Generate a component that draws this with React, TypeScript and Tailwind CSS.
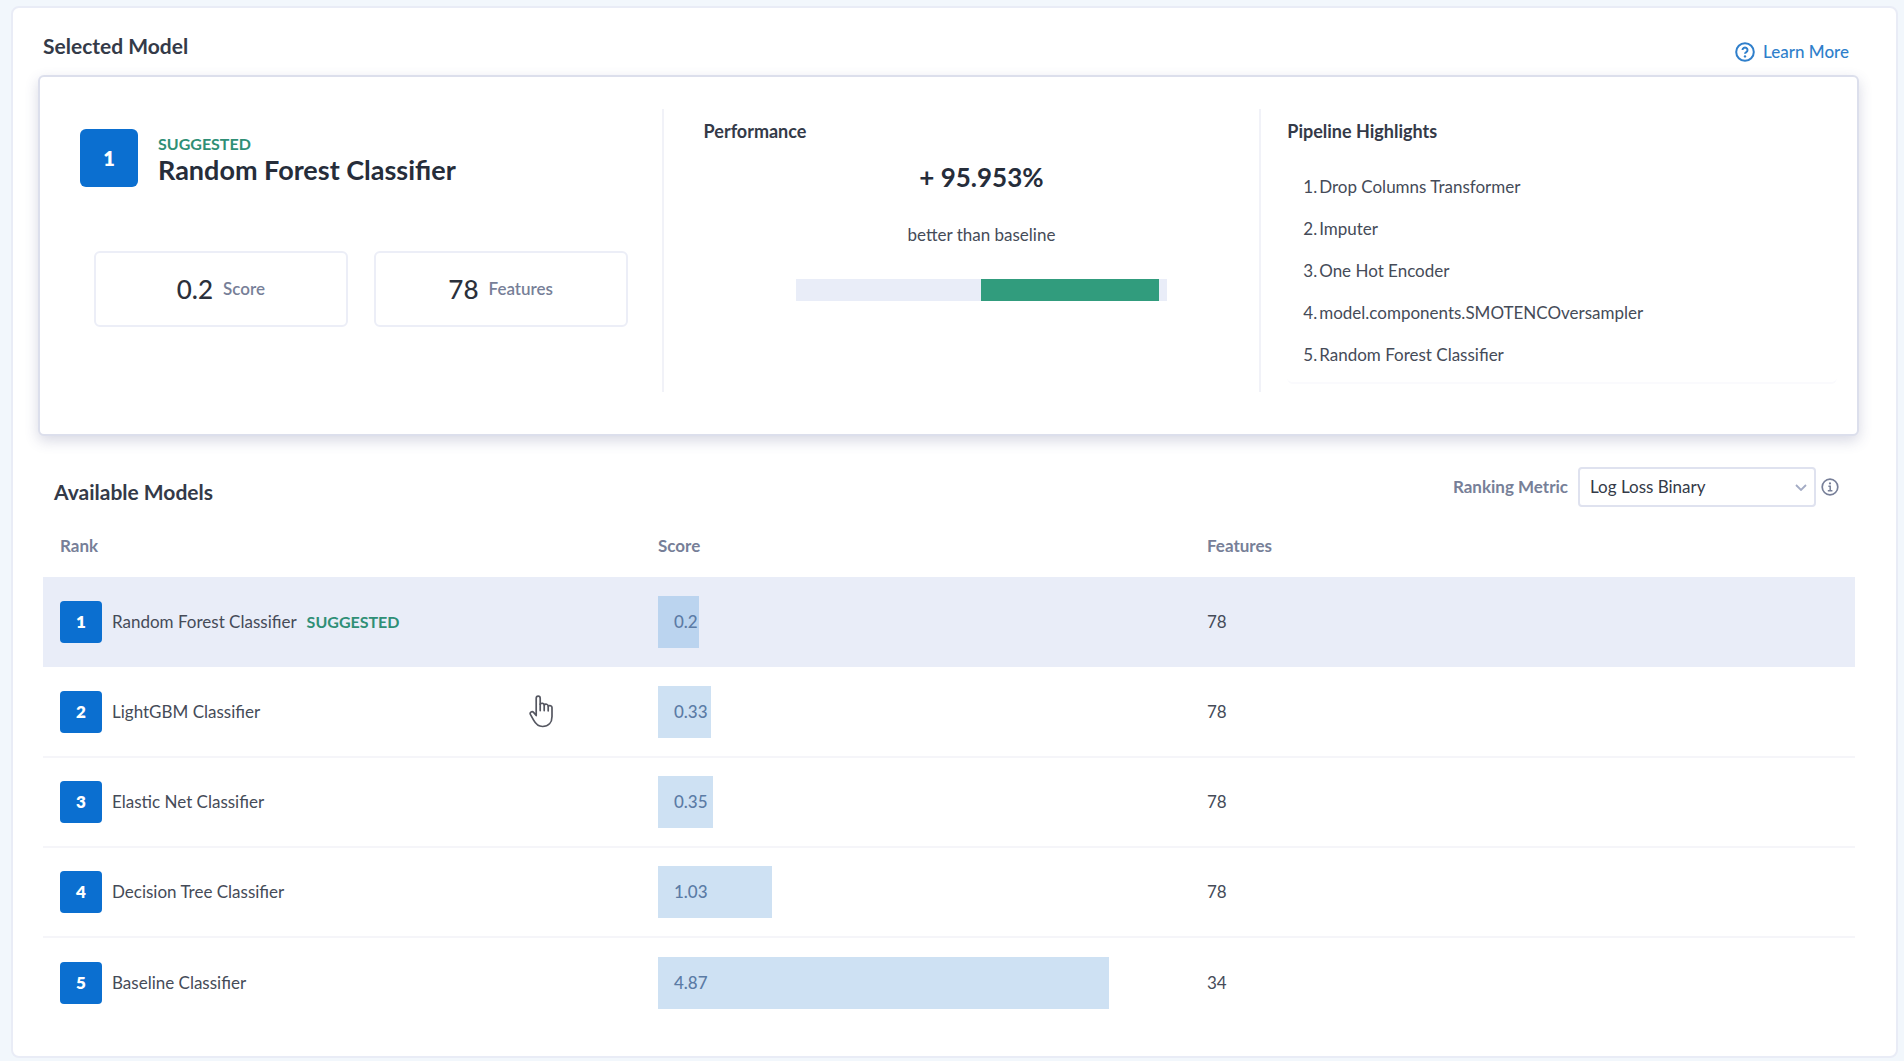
import React, { useState } from "react";

interface Model {
  rank: number;
  name: string;
  score: number;
  features: number;
}

const MODELS: Model[] = [
  { rank: 1, name: "Random Forest Classifier", score: 0.2, features: 78 },
  { rank: 2, name: "LightGBM Classifier", score: 0.33, features: 78 },
  { rank: 3, name: "Elastic Net Classifier", score: 0.35, features: 78 },
  { rank: 4, name: "Decision Tree Classifier", score: 1.03, features: 78 },
  { rank: 5, name: "Baseline Classifier", score: 4.87, features: 34 },
];

const PIPELINE = [
  "Drop Columns Transformer",
  "Imputer",
  "One Hot Encoder",
  "model.components.SMOTENCOversampler",
  "Random Forest Classifier",
];

const METRICS = ["Log Loss Binary", "AUC", "F1", "Precision"];

const IMPROVEMENT = 95.953;

// a small base width keeps the label inside the shortest bars
const barWidth = (score: number) => `${(4.5 + score * 16.5).toFixed(2)}%`;

const HelpIcon = () => (
  <svg className="size-5" viewBox="0 0 20 20" fill="none" stroke="currentColor" strokeWidth="2" aria-hidden="true">
    <circle cx="10" cy="10" r="8.8" />
    <path d="M7.5 8a2.5 2.4 0 1 1 3.8 2.1c-.9.5-1.3.9-1.3 1.7" />
    <circle cx="10" cy="14.4" r="1.2" fill="currentColor" stroke="none" />
  </svg>
);

const InfoIcon = () => (
  <svg className="size-[18px]" viewBox="0 0 18 18" fill="none" stroke="currentColor" strokeWidth="1.7" aria-hidden="true">
    <circle cx="9" cy="9" r="7.8" />
    <path d="M7.4 8.2h1.8v4.2M6.8 12.8h4.6" strokeWidth="1.5" />
    <circle cx="9" cy="5.4" r="1.1" fill="currentColor" stroke="none" />
  </svg>
);

const ChevronIcon = () => (
  <svg className="h-[7px] w-3" viewBox="0 0 12 7" fill="none" stroke="currentColor" strokeWidth="1.8" aria-hidden="true">
    <path d="M1 1l5 5 5-5" />
  </svg>
);

const HandPointer = () => (
  <svg className="h-[33px] w-6" viewBox="0 0 24 33" fill="#fff" stroke="#555761" strokeWidth="1.7" strokeLinejoin="round" strokeLinecap="round" aria-hidden="true">
    <path d="M7.2 20.5V3.4C7.2 .4 11.2 .4 11.2 3.4V9.2C12.6 7.6 15 8.2 15.2 9.8C16.6 8.6 19 9.2 19.2 11C20.8 10 23 10.8 23 12.6V21.5C23 27.5 19.5 31.5 13.6 31.5C8.6 31.5 6.4 28.5 4.6 25.2L1.4 19.4C.4 17 3.2 15.8 4.8 17.6Z" />
    <path d="M11.2 9.2V15.6M15.2 9.8V15.6M19.2 11V15.8" fill="none" />
  </svg>
);

const Stat = ({ value, label }: { value: number; label: string }) => (
  <div className="flex h-[76px] flex-1 items-center justify-center gap-[10px] rounded-md border-2 border-[#eceef7]">
    <span className="text-[26px] font-medium text-[#2b303b]">{value}</span>
    <span className="text-[17px] font-semibold text-[#777f98]">{label}</span>
  </div>
);

const SelectedModel = ({ model }: { model: Model }) => (
  <section className="grid min-h-[361px] grid-cols-[26fr_25fr_25fr] rounded-md border-2 border-[#dcdfec] bg-white pt-8 pb-[42px] shadow-[0_5px_14px_rgba(60,65,120,0.2)]">
    <div className="pt-5 pr-[34px] pl-10">
      <div className="flex items-center gap-5">
        <span className="flex size-[58px] items-center justify-center rounded-md bg-[#0b6fd0] text-xl font-extrabold text-white">
          {model.rank}
        </span>
        <div className="pt-1">
          <p className="text-base leading-5 font-bold text-[#2f8f76]">SUGGESTED</p>
          <h3 className="text-[27px] leading-8 font-bold text-[#262d3a]">{model.name}</h3>
        </div>
      </div>
      <div className="mt-16 flex gap-[26px] pl-[14px]">
        <Stat value={model.score} label="Score" />
        <Stat value={model.features} label="Features" />
      </div>
    </div>

    <div className="border-l-2 border-[#f1f2f8] pt-[10px] pl-10">
      <h3 className="text-lg leading-6 font-bold text-[#343a48]">Performance</h3>
      <div className="flex flex-col items-center">
        <p className="mt-[18px] text-[26px] leading-8 font-bold text-[#262d3a]">+ {IMPROVEMENT}%</p>
        <p className="mt-[30px] text-[17px] leading-6 text-[#454b58]">better than baseline</p>
        <div className="mt-8 flex h-[22px] w-2/3 bg-[#e9edf8]">
          <div className="w-1/2" />
          <div className="w-1/2">
            <div className="h-full bg-[#319c7d]" style={{ width: `${IMPROVEMENT}%` }} />
          </div>
        </div>
      </div>
    </div>

    <div className="border-l-2 border-[#f1f2f8] pt-[10px] pr-5 pl-[26px]">
      <h3 className="text-lg leading-6 font-bold text-[#343a48]">Pipeline Highlights</h3>
      <ol className="mt-[23px] rounded-md border-b-2 border-[#fafafd] pb-[6px] pl-4 text-[17px] leading-[42px] text-[#454b58]">
        {PIPELINE.map((step, i) => (
          <li key={step} className="flex gap-[2px]">
            <span>{i + 1}.</span>
            <span>{step}</span>
          </li>
        ))}
      </ol>
    </div>
  </section>
);

const ModelTable = ({ selected, onSelect }: { selected: number; onSelect: (rank: number) => void }) => (
  <table className="w-full table-fixed text-left text-[17px]">
    <thead>
      <tr className="h-[62px] text-[#777f98]">
        <th className="w-[33%] pl-[17px] font-bold">Rank</th>
        <th className="w-[30.3%] pl-[17px] font-bold">Score</th>
        <th className="pl-[17px] font-bold">Features</th>
      </tr>
    </thead>
    <tbody>
      {MODELS.map((model) => (
        <tr
          key={model.rank}
          onClick={() => onSelect(model.rank)}
          className={`h-[90px] cursor-pointer text-[#454b58] ${model.rank === selected ? "bg-[#e9edf8]" : "border-b-2 border-[#f5f5f9] last:border-0"}`}
        >
          <td className="relative pl-[17px]">
            <div className="flex items-center">
              <span className="flex size-[42px] items-center justify-center rounded bg-[#0b6fd0] font-extrabold text-white">
                {model.rank}
              </span>
              <span className="ml-[10px]">{model.name}</span>
              {model.rank === 1 && (
                <span className="ml-[10px] text-base font-bold text-[#2f8f76]">SUGGESTED</span>
              )}
            </div>
            {model.rank === 2 && (
              <span className="pointer-events-none absolute top-7 right-[88px]">
                <HandPointer />
              </span>
            )}
          </td>
          <td className="pl-[17px]">
            <div
              className={`flex h-[52px] items-center pl-4 font-medium text-[#5b7ba5] ${model.rank === selected ? "bg-[#bbd4ef]" : "bg-[#cee1f3]"}`}
              style={{ width: barWidth(model.score) }}
            >
              {model.score}
            </div>
          </td>
          <td className="pl-[17px]">{model.features}</td>
        </tr>
      ))}
    </tbody>
  </table>
);

export default function App() {
  const [selected, setSelected] = useState(1);
  const [metric, setMetric] = useState(METRICS[0]);

  const model = MODELS.find((m) => m.rank === selected) ?? MODELS[0];

  return (
    <div className="min-h-screen bg-[#f2f7fc] pt-[6px] pr-[6px] pb-[2px] pl-[11px] font-['Lato',sans-serif]">
      <main className="rounded-lg border-2 border-[#e9ecf6] bg-white pt-[22px] pr-[37px] pb-[29px] pl-[25px]">
        <header className="flex h-[45px] items-start justify-between pr-[10px] pl-[5px]">
          <h2 className="text-[21px] leading-8 font-bold text-[#343a48]">Selected Model</h2>
          <a href="#learn-more" className="flex items-center gap-2 pt-[10px] text-[17px] leading-6 font-medium text-[#2f7fcb]">
            <HelpIcon />
            Learn More
          </a>
        </header>

        <SelectedModel model={model} />

        <div className="mt-[31px] flex items-start justify-between pr-5 pl-4">
          <h2 className="pt-[9px] text-[21px] leading-8 font-bold text-[#343a48]">Available Models</h2>
          <div className="flex items-center">
            <label htmlFor="metric" className="mr-[10px] text-[17px] font-bold text-[#777f98]">
              Ranking Metric
            </label>
            <div className="relative">
              <select
                id="metric"
                value={metric}
                onChange={(e) => setMetric(e.target.value)}
                className="h-10 w-[238px] appearance-none rounded border-2 border-[#dfe2ef] bg-white pl-[10px] text-[17px] text-[#343a48]"
              >
                {METRICS.map((m) => (
                  <option key={m}>{m}</option>
                ))}
              </select>
              <span className="pointer-events-none absolute inset-y-0 right-[9px] flex items-center text-[#a3abc4]">
                <ChevronIcon />
              </span>
            </div>
            <button type="button" aria-label="About ranking metric" className="ml-[5px] text-[#777f98]">
              <InfoIcon />
            </button>
          </div>
        </div>

        <div className="pt-[7px] pr-1 pl-[5px]">
          <ModelTable selected={selected} onSelect={setSelected} />
        </div>
      </main>
    </div>
  );
}
